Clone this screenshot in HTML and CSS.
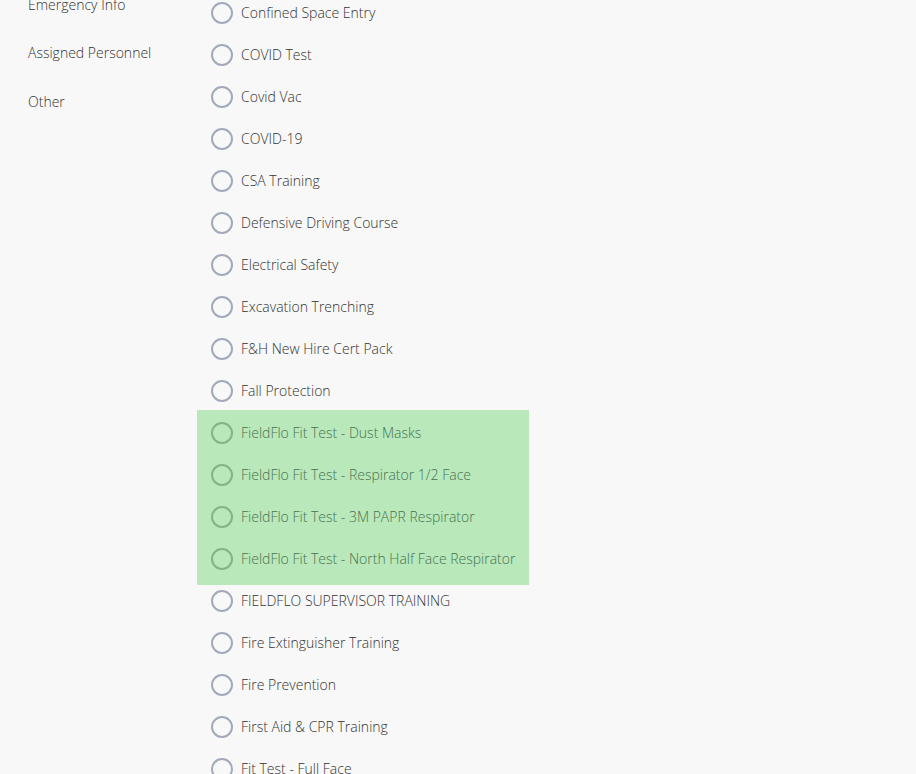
FILE: index.html
```html
<!DOCTYPE html>
<html>
<head>
<meta charset="utf-8">
<link rel="stylesheet" href="styles.css">
</head>
<body>
<div class="page">
  <nav class="side">
    <div class="side-item">Emergency Info</div>
    <div class="side-item">Assigned Personnel</div>
    <div class="side-item">Other</div>
  </nav>
  <div class="list">
    <div class="row"><span class="radio"></span><span class="label">Confined Space Entry</span></div>
    <div class="row"><span class="radio"></span><span class="label">COVID Test</span></div>
    <div class="row"><span class="radio"></span><span class="label">Covid Vac</span></div>
    <div class="row"><span class="radio"></span><span class="label">COVID-19</span></div>
    <div class="row"><span class="radio"></span><span class="label">CSA Training</span></div>
    <div class="row"><span class="radio"></span><span class="label">Defensive Driving Course</span></div>
    <div class="row"><span class="radio"></span><span class="label">Electrical Safety</span></div>
    <div class="row"><span class="radio"></span><span class="label">Excavation Trenching</span></div>
    <div class="row"><span class="radio"></span><span class="label">F&amp;H New Hire Cert Pack</span></div>
    <div class="row"><span class="radio"></span><span class="label">Fall Protection</span></div>
    <div class="group-hl">
      <div class="row"><span class="radio"></span><span class="label">FieldFlo Fit Test - Dust Masks</span></div>
      <div class="row"><span class="radio"></span><span class="label">FieldFlo Fit Test - Respirator 1/2 Face</span></div>
      <div class="row"><span class="radio"></span><span class="label">FieldFlo Fit Test - 3M PAPR Respirator</span></div>
      <div class="row"><span class="radio"></span><span class="label">FieldFlo Fit Test - North Half Face Respirator</span></div>
    </div>
    <div class="row"><span class="radio"></span><span class="label">FIELDFLO SUPERVISOR TRAINING</span></div>
    <div class="row"><span class="radio"></span><span class="label">Fire Extinguisher Training</span></div>
    <div class="row"><span class="radio"></span><span class="label">Fire Prevention</span></div>
    <div class="row"><span class="radio"></span><span class="label">First Aid &amp; CPR Training</span></div>
    <div class="row"><span class="radio"></span><span class="label">Fit Test - Full Face</span></div>
  </div>
</div>
</body>
</html>
```
FILE: styles.css
```css
html, body {
  margin: 0;
  padding: 0;
  background: #f8f8f8;
  overflow: hidden;
}
body {
  font-family: "Open Sans", "Liberation Sans", sans-serif;
  font-size: 14px;
  font-weight: 300;
  color: #333333;
  height: 774px;
}
.page {
  display: flex;
  align-items: flex-start;
}
.side {
  width: 197px;
  padding-left: 28px;
  box-sizing: border-box;
  margin-top: -19px;
  display: flex;
  flex-direction: column;
}
.side-item {
  height: 48px;
  line-height: 48px;
}
.side-item:last-child {
  line-height: 50px;
}
.list {
  width: 332px;
  margin-top: -8px;
  display: flex;
  flex-direction: column;
}
.row {
  height: 42px;
  display: flex;
  align-items: center;
  padding-left: 14px;
}
.radio {
  width: 22px;
  height: 22px;
  box-sizing: border-box;
  border: 2px solid #a2aaba;
  border-radius: 50%;
  flex: none;
  margin-right: 8px;
}
.label {
  line-height: 20px;
  margin-bottom: 1px;
  white-space: nowrap;
}
.group-hl {
  background: #b9e8bb;
  padding-top: 2px;
  padding-bottom: 5px;
  margin-top: -2px;
  margin-bottom: -5px;
  color: #477350;
}
.group-hl .radio {
  border-color: #82b487;
}
```
